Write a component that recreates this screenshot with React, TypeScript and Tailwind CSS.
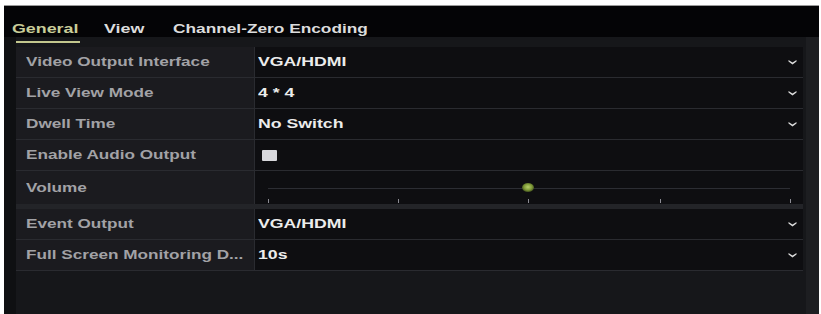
import React from "react";

const Chevron = () => (
  <svg width="9" height="6" viewBox="0 0 9 6" className="shrink-0">
    <path d="M0.5 1 L4.5 3.4 L8.5 1 L8.5 2.6 L4.5 5.5 L0.5 2.6 Z" fill="#dcdcdc" />
  </svg>
);

type RowProps = {
  label: string;
  children?: React.ReactNode;
  arrow?: boolean;
};

const Row = ({ label, children, arrow }: RowProps) => (
  <div className="flex h-[31px] border-b border-[#2a2b30]">
    <div className="flex w-[238px] items-center bg-[#1b1b1f] pl-[10px]">
      <span className="inline-block origin-left scale-x-[1.32] whitespace-nowrap text-[13px] font-bold leading-4 text-[#a2a2a6]">
        {label}
      </span>
    </div>
    <div className="w-px bg-[#2a2b30]" />
    <div className="flex flex-1 items-center justify-between bg-[#0e0e11] pl-[3px] pr-[6px]">
      <span className="inline-block origin-left scale-x-[1.36] whitespace-nowrap text-[13px] font-bold leading-4 text-[#ececec]">
        {children}
      </span>
      {arrow && <Chevron />}
    </div>
  </div>
);

export default function App() {
  const ticks = [13, 143, 273, 405, 535];
  return (
    <div className="h-[314px] w-[821px] overflow-hidden bg-white pl-[4px] pr-[2px] pt-[5px] font-['Liberation_Sans',Arial,sans-serif]">
      <div className="flex h-full flex-col border-t border-[#9a9a9a] bg-[#16171a]">
        {/* Tab bar */}
        <div className="flex h-[31px] shrink-0 items-start bg-[#040406] pl-[6px] pt-[10px]">
          <div className="w-[94px]">
            <div className="w-[70px] border-b-2 border-[#c3c78e] pb-[1px] pl-[2px]">
              <span className="inline-block origin-left scale-x-[1.32] whitespace-nowrap text-[13.5px] font-bold leading-4 text-[#c9cd98]">
                General
              </span>
            </div>
          </div>
          <div className="w-[69px]">
            <span className="inline-block origin-left scale-x-[1.32] whitespace-nowrap text-[13.5px] font-bold leading-4 text-[#dcdcdc]">
              View
            </span>
          </div>
          <div>
            <span className="inline-block origin-left scale-x-[1.28] whitespace-nowrap text-[13.5px] font-bold leading-4 text-[#dcdcdc]">
              Channel-Zero Encoding
            </span>
          </div>
        </div>

        {/* Content */}
        <div className="flex flex-1">
          <div className="w-[12px] bg-[#0f1012]" />
          <div className="flex-1 pt-[10px]">
            <div className="w-[787px]">
              <Row label="Video Output Interface" arrow>
                VGA/HDMI
              </Row>
              <Row label="Live View Mode" arrow>
                4 * 4
              </Row>
              <Row label="Dwell Time" arrow>
                No Switch
              </Row>
              <div className="flex h-[31px] border-b border-[#2a2b30]">
                <div className="flex w-[238px] items-center bg-[#1b1b1f] pl-[10px]">
                  <span className="inline-block origin-left scale-x-[1.32] whitespace-nowrap text-[13px] font-bold leading-4 text-[#a2a2a6]">
                    Enable Audio Output
                  </span>
                </div>
                <div className="w-px bg-[#2a2b30]" />
                <div className="flex flex-1 items-center bg-[#0e0e11] pl-[7px]">
                  <div className="h-[11px] w-[15px] rounded-[1px] bg-[#d8d8dc]" />
                </div>
              </div>
              {/* Volume */}
              <div className="flex h-[33px]">
                <div className="flex w-[238px] items-center bg-[#1b1b1f] pl-[10px]">
                  <span className="inline-block origin-left scale-x-[1.32] whitespace-nowrap text-[13px] font-bold leading-4 text-[#a2a2a6]">
                    Volume
                  </span>
                </div>
                <div className="w-px bg-[#2a2b30]" />
                <div className="flex-1 bg-[#0e0e11]">
                  <svg width="548" height="33" viewBox="0 0 548 33">
                    <defs>
                      <radialGradient id="knob" cx="50%" cy="45%" r="55%">
                        <stop offset="0%" stopColor="#b7cf6a" />
                        <stop offset="60%" stopColor="#7f9a38" />
                        <stop offset="100%" stopColor="#3f4d1c" />
                      </radialGradient>
                    </defs>
                    <line x1="13" y1="17.5" x2="535" y2="17.5" stroke="#2c2d33" strokeWidth="1" />
                    {ticks.map((x) => (
                      <line key={x} x1={x + 0.5} y1="28" x2={x + 0.5} y2="32" stroke="#8c8c94" strokeWidth="1" />
                    ))}
                    <ellipse cx="273" cy="16.5" rx="6" ry="4.5" fill="url(#knob)" />
                  </svg>
                </div>
              </div>
              <div className="h-[5px] bg-[#232428]" />
              <Row label="Event Output" arrow>
                VGA/HDMI
              </Row>
              <Row label="Full Screen Monitoring D..." arrow>
                10s
              </Row>
            </div>
          </div>
          <div className="w-[13px] bg-[#1d1e21]" />
        </div>
      </div>
    </div>
  );
}
